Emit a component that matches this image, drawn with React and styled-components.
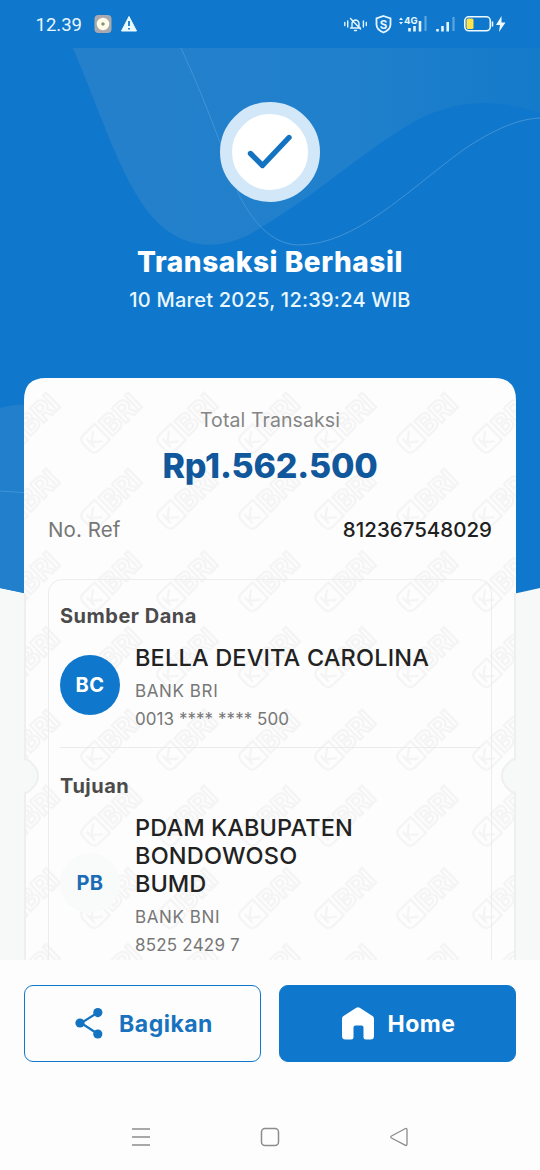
import React from 'react';
import styled, { createGlobalStyle } from 'styled-components';

const blue = '#1078cc';

const GlobalStyle = createGlobalStyle`
  * { box-sizing: border-box; }
  body { margin: 0; background: #fdfdfd; font-family: Inter, "Liberation Sans", sans-serif; }
`;

const Screen = styled.main`
  width: 540px;
  height: 1170px;
  display: flex;
  flex-direction: column;
  overflow: hidden;
  background: #fdfdfd;
`;

const StatusBar = styled.header`
  height: 48px;
  flex: none;
  background: ${blue};
`;

const StatusArt = styled.svg`
  display: block;
`;

const Content = styled.section`
  position: relative;
  isolation: isolate;
  height: 912px;
  flex: none;
  overflow: hidden;
  background: #f7f8f8;
  display: flex;
  flex-direction: column;
  align-items: center;
`;

const Backdrop = styled.svg`
  position: absolute;
  inset: 0;
  z-index: -1;
`;

const Badge = styled.div`
  width: 100px;
  height: 100px;
  margin-top: 53.5px;
  flex: none;
  border-radius: 50%;
  border: 12px solid #d2e7f8;
  background: #fff;
  display: grid;
  place-items: center;
`;

const Line = styled.div`
  font-size: ${(p) => p.$size}px;
  line-height: ${(p) => p.$lh}px;
  font-weight: ${(p) => p.$weight || 400};
  letter-spacing: ${(p) => p.$track || 0}px;
  color: ${(p) => p.$color};
  margin-top: ${(p) => p.$top || 0}px;
  white-space: nowrap;
`;

const Card = styled.article`
  position: relative;
  isolation: isolate;
  flex: none;
  width: 492px;
  height: 640px;
  margin-top: 65px;
  padding: 28px 24px 0;
  display: flex;
  flex-direction: column;
  align-items: center;
`;

const RefRow = styled.div`
  align-self: stretch;
  display: flex;
  justify-content: space-between;
  margin-top: 29px;
`;

const Accounts = styled.div`
  align-self: stretch;
  flex: 1;
  margin-top: 35px;
  padding: 0 11px;
  border: 1px solid #ededed;
  border-radius: 14px 14px 0 0;
`;

const Party = styled.section`
  padding-top: ${(p) => p.$pad}px;
  height: ${(p) => p.$height}px;
  border-bottom: 1px solid #ebebeb;
`;

const PartyRow = styled.div`
  display: flex;
  align-items: center;
  gap: 15px;
  margin-top: ${(p) => p.$top}px;
`;

const Avatar = styled.div`
  width: 60px;
  height: 60px;
  margin-bottom: 8px;
  flex: none;
  border-radius: 50%;
  display: grid;
  place-items: center;
  font-size: 20px;
  font-weight: 700;
  letter-spacing: 0.5px;
  background: ${(p) => (p.$light ? '#f9fafa' : blue)};
  color: ${(p) => (p.$light ? '#1b6cb5' : '#fff')};
`;

const Footer = styled.footer`
  flex: none;
  height: 144px;
  padding: 25px 24px 0;
  display: flex;
  gap: 18px;
  background: #fdfdfd;
`;

const Button = styled.button`
  flex: none;
  width: 237px;
  height: 77px;
  padding: 0 0 0 ${(p) => p.$shift || 0}px;
  border-radius: 9px;
  border: 1.5px solid ${blue};
  display: flex;
  align-items: center;
  justify-content: center;
  gap: ${(p) => p.$gap}px;
  font: 700 23px/28px Inter, sans-serif;
  letter-spacing: ${(p) => p.$track}px;
  background: ${(p) => (p.$solid ? blue : 'transparent')};
  color: ${(p) => (p.$solid ? '#fff' : '#1872bd')};
`;

const NavBar = styled.nav`
  flex: none;
  height: 66px;
  display: flex;
  justify-content: center;
  gap: 109px;
  padding-top: 23px;
`;

function StatusIcons() {
  return (
    <StatusArt width="540" height="48" viewBox="0 0 540 48" fill="none">
      <text x="35.5" y="30.5" fontSize="18.5" fill="#e8f7ff" fontFamily="Roboto">12.39</text>
      <rect x="94.500" y="15" width="17" height="18" rx="4" fill="#aaa9b0" />
      <circle cx="103" cy="24" r="4" stroke="#fffde8" strokeWidth="4.500" fill="#8b927a" />
      <path d="M129 16.500 136.500 31h-15z" fill="#eafaff" stroke="#eafaff" strokeLinejoin="round" />
      <path d="M129 21v5M129 28v1.500" stroke={blue} strokeWidth="1.800" />
      <g stroke="#e4f6ff" strokeWidth="1.400" strokeLinecap="round">
        <path d="M350.500 28h10M352 28v-4q0-3.500 3.500-4Q359 20.500 359 24v4M354.500 30.500h2M350.500 18.500 360.500 29M347.700 21v6M363.400 21v6" />
        <path d="M344.800 22.500v3M366.300 22.500v3" />
        <path d="m383.500 16 7 2.500v6q0 5-7 8-7-3-7-8v-6z" strokeWidth="1.800" />
      </g>
      <text x="379.700" y="28.500" fontSize="11.500" fontWeight="700" fill="#e4f6ff" fontFamily="Inter">S</text>
      <path d="m399 20 2-2.500 2 2.500zm0 2 2 2.500 2-2.500z" fill="#e4f6ff" />
      <text x="404" y="24" fontSize="9.500" fontWeight="700" fill="#e4f6ff" fontFamily="Inter">4G</text>
      <path d="M409.500 31.500v-3.500M414.500 31.500V26M420 31.500V21M437.500 31.500v-2.500M442.500 31.500V26M447.700 31.500V22" stroke="#e4f6ff" strokeWidth="2.600" />
      <path d="M425.500 31V16M453.500 31V17" stroke="#5ca6df" strokeWidth="2.200" />
      <rect x="464.800" y="16.800" width="25.500" height="14" rx="4" stroke="#eefaff" strokeWidth="1.600" />
      <rect x="466.500" y="18.500" width="7" height="10.500" rx="1.500" fill="#ffe24c" />
      <path d="M492.500 21.500v5" stroke="#eefaff" strokeWidth="1.500" />
      <path d="m501.500 16-5.500 9h4l-1 7 6.500-9.500h-4z" fill="#eefaff" />
    </StatusArt>
  );
}

function Waves() {
  return (
    <Backdrop width="540" height="912" viewBox="0 48 540 912" fill="none">
      <defs>
        <linearGradient id="wave" x1="75" y1="0" x2="540" y2="0" gradientUnits="userSpaceOnUse">
          <stop offset="0" stopColor="#2580cb" />
          <stop offset=".6" stopColor="#2080cc" />
          <stop offset="1" stopColor="#147aca" />
        </linearGradient>
      </defs>
      <path d="M0 48H540V588Q270 650 0 588Z" fill={blue} />
      <path d="M73 48C102 116 120 176 149 213C178 248 215 253 252 233C318 194 356 157 405 127C451 98 495 98 540 113V48Z" fill="url(#wave)" />
      <path d="M181 48C206 102 221 145 239 195C255 226 274 244 298 245C356 245 408 190 463 150C493 130 517 119 540 118" stroke="#4093d8" />
      <path d="M0 408Q14 404 30 405V594L0 588Z" fill="#217fcb" />
      <path d="M0 491 30 493" stroke="#4093d8" />
    </Backdrop>
  );
}

function Watermark({ x, y }) {
  return (
    <g transform={`translate(${x} ${y}) rotate(-44)`} fill="none" stroke="#f4f4f4" strokeWidth="2.200">
      <path d="M-30-11H-15V11H-30Q-37 11-37 4V-4Q-37-11-30-11ZM-31-6V6M-30 0-21-7M-30 0-21 7" />
      <text x="-12" y="10" fontSize="28" fontWeight="700" fontFamily="Inter" strokeWidth="2.200">BRI</text>
    </g>
  );
}

function CardBackdrop() {
  return (
    <Backdrop width="492" height="640" viewBox="0 0 492 640">
      <defs>
        <pattern id="marks" width="158" height="158.500" patternUnits="userSpaceOnUse" x="48" y="4">
          <Watermark x={41} y={39.5} />
          <Watermark x={117} y={39.5} />
          <Watermark x={41} y={115.5} />
          <Watermark x={117} y={115.5} />
        </pattern>
        <clipPath id="cardShape">
          <path d="M0 640V414Q4 414 7 410Q13 405 13 398T7 386Q4 382 0 382V22Q0 0 22 0H470Q492 0 492 22V382Q488 382 485 386Q479 391 479 398T485 410Q488 414 492 414V640Z" />
        </clipPath>
      </defs>
      <g clipPath="url(#cardShape)">
        <path d="M0 0H492V640H0Z" fill="#fdfdfd" />
        <path d="M0 0H492V640H0Z" fill="url(#marks)" />
        <path d="M0 640V414Q4 414 7 410Q13 405 13 398T7 386Q4 382 0 382V215M492 215V382Q488 382 485 386Q479 391 479 398T485 410Q488 414 492 414V640" fill="none" stroke="#eeefef" strokeWidth="4" />
      </g>
    </Backdrop>
  );
}

function ShareIcon() {
  return (
    <svg width="28" height="32" viewBox="0 0 28 32" fill="#1473c0">
      <path d="M23 4.500 6 15 23 26" fill="none" stroke="#1473c0" strokeWidth="2.200" />
      <circle cx="22.800" cy="4.600" r="4.600" />
      <circle cx="5" cy="15" r="4.600" />
      <circle cx="22.800" cy="26" r="4.600" />
    </svg>
  );
}

function HomeIcon() {
  return (
    <svg width="34" height="34" viewBox="0 0 34 34" fill="#fff">
      <path d="M15.300 .8Q17-.4 18.700 .8L31.500 9Q33 10 33 12V29Q33 32.500 29.500 32.500H25Q22.500 32.500 22.500 30V20.500Q22.500 18.500 20.500 18.500H14.500Q12.500 18.500 12.500 20.500V30Q12.500 32.500 10 32.500H4.500Q1 32.500 1 29V12Q1 10 2.500 9Z" />
    </svg>
  );
}

export default function App() {
  return (
    <>
      <GlobalStyle />
      <Screen>
        <StatusBar><StatusIcons /></StatusBar>
        <Content>
          <Waves />
          <Badge>
            <svg width="46" height="36" viewBox="0 0 46 36" fill="none">
              <path d="M3.500 19.500 15.500 31.500 42 3.500" stroke="#1473c0" strokeWidth="5.400" strokeLinecap="round" strokeLinejoin="round" />
            </svg>
          </Badge>
          <Line $size={28} $lh={36} $weight={800} $track={0.55} $color="#fff" $top={42.5}>Transaksi Berhasil</Line>
          <Line $size={20} $lh={26} $weight={500} $track={0.24} $color="#e9f7ff" $top={7}>10 Maret 2025, 12:39:24 WIB</Line>
          <Card>
            <CardBackdrop />
            <Line $size={19.5} $lh={28} $track={0.1} $color="#858585">Total Transaksi</Line>
            <Line $size={34} $lh={42} $weight={800} $track={-0.2} $color="#10589b" $top={11}>Rp1.562.500</Line>
            <RefRow>
              <Line $size={20.5} $lh={28} $track={0.1} $color="#777">No. Ref</Line>
              <Line $size={20.5} $lh={28} $weight={500} $color="#202020">812367548029</Line>
            </RefRow>
            <Accounts>
              <Party $height={168} $pad={22}>
                <Line $size={20} $lh={28} $weight={700} $track={0.5} $color="#4b4b4b">Sumber Dana</Line>
                <PartyRow $top={14}>
                  <Avatar>BC</Avatar>
                  <div>
                    <Line $size={23.5} $lh={28} $weight={500} $track={0.18} $color="#222">BELLA DEVITA CAROLINA</Line>
                    <Line $size={17} $lh={28} $color="#777" $track={0.6} $top={5}>BANK BRI</Line>
                    <Line $size={17} $lh={28} $color="#777" $track={0.05}>0013 **** **** 500</Line>
                  </div>
                </PartyRow>
              </Party>
              <Party $height={260} $pad={24}>
                <Line $size={20} $lh={28} $weight={700} $track={0.5} $color="#4b4b4b">Tujuan</Line>
                <PartyRow $top={14}>
                  <Avatar $light>PB</Avatar>
                  <div>
                    <Line $size={23.5} $lh={28} $weight={500} $track={0.1} $color="#222">PDAM KABUPATEN</Line>
                    <Line $size={23.5} $lh={28} $weight={500} $track={0.2} $color="#222">BONDOWOSO</Line>
                    <Line $size={23.5} $lh={28} $weight={500} $color="#222">BUMD</Line>
                    <Line $size={17} $lh={28} $color="#777" $track={0.6} $top={5}>BANK BNI</Line>
                    <Line $size={17} $lh={28} $color="#777" $track={0.2}>8525 2429 7</Line>
                  </div>
                </PartyRow>
              </Party>
            </Accounts>
          </Card>
        </Content>
        <Footer>
          <Button $gap={16} $track={0.5} $shift={3}><ShareIcon />Bagikan</Button>
          <Button $solid $gap={13} $track={0.5} $shift={1}><HomeIcon />Home</Button>
        </Footer>
        <NavBar>
          <svg width="20" height="20" viewBox="0 0 20 20" stroke="#8c8c8c" strokeWidth="1.500"><path d="M1 2h18M1 10h18M1 18h18" /></svg>
          <svg width="20" height="20" viewBox="0 0 20 20" fill="none" stroke="#8c8c8c" strokeWidth="1.500"><rect x="1.500" y="1.500" width="17" height="17" rx="3.500" /></svg>
          <svg width="20" height="20" viewBox="0 0 20 20" fill="none" stroke="#8c8c8c" strokeWidth="1.300"><path d="M16.500 1.500Q18 1 18 3V17Q18 19 16.500 18.300L2.500 11Q1 10 2.500 9Z" /></svg>
        </NavBar>
      </Screen>
    </>
  );
}
